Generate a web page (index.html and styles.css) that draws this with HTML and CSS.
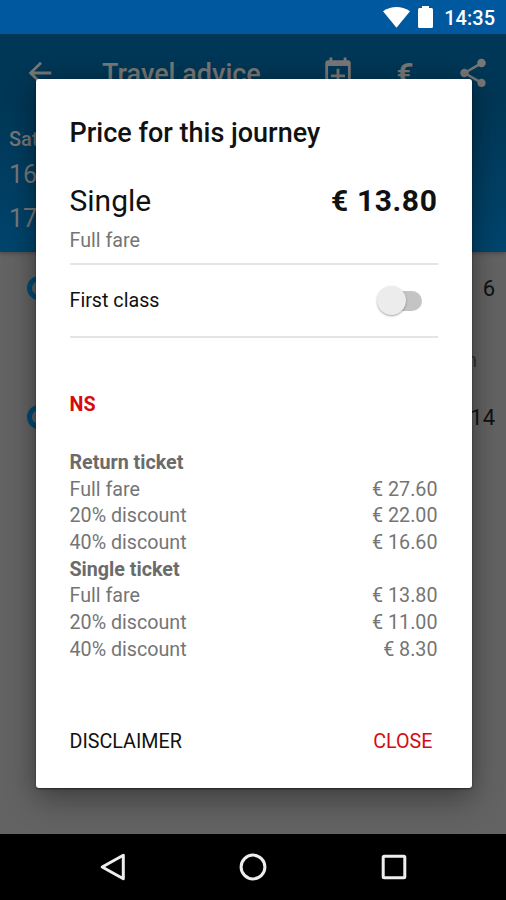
FILE: index.html
```html
<!DOCTYPE html>
<html lang="en">
<head>
<meta charset="utf-8">
<title>Travel advice</title>
<link rel="stylesheet" href="styles.css">
</head>
<body>
<div class="phone">
  <div class="status">
    <svg class="wifi" width="27" height="21" viewBox="0 0 27 21"><path d="M0 4.2Q13.5-4.2 27 4.2L13.5 20.7Z"/></svg>
    <svg class="battery" width="15" height="22" viewBox="0 0 15 22"><path d="M4 2V0h7v2h2.5Q15 2 15 3.5v17Q15 22 13.500 22h-12Q0 22 0 20.500v-17Q0 2 1.500 2Z"/></svg>
    <span>14:35</span>
  </div>
  <main class="screen">
    <header class="header">
      <div class="toolbar">
        <svg class="back" width="34" height="34" viewBox="0 0 24 24"><path d="M20 11H7.830l5.590-5.590L12 4l-8 8 8 8 1.410-1.410L7.830 13H20z"/></svg>
        <h1>Travel advice</h1>
        <svg class="calendar" width="34" height="34" viewBox="0 0 24 24"><path d="M17 13h-4V9h-2v4H7v2h4v4h2v-4h4zM16 1v2H8V1H6v2H5c-1.110 0-1.990.9-1.990 2L3 21h18V5c0-1.100-.9-2-2-2h-1V1zM19 19H5V7h14z" fill-rule="evenodd"/></svg>
        <span class="euro">€</span>
        <svg class="share" width="34" height="34" viewBox="0 0 24 24"><path d="M18 16.080c-.76 0-1.440.3-1.960.77L8.910 12.700c.05-.23.09-.46.09-.7s-.04-.47-.09-.7l7.050-4.110c.54.5 1.250.81 2.040.81 1.660 0 3-1.340 3-3s-1.340-3-3-3-3 1.340-3 3c0 .24.04.47.09.7L8.040 9.810C7.500 9.310 6.790 9 6 9c-1.660 0-3 1.340-3 3s1.340 3 3 3c.79 0 1.500-.31 2.040-.81l7.120 4.160c-.05.21-.08.43-.08.65 0 1.610 1.310 2.920 2.920 2.920s2.920-1.310 2.920-2.920-1.310-2.920-2.920-2.920z"/></svg>
      </div>
      <div class="day">Sat</div>
      <div class="time">16</div>
      <div class="time">17</div>
    </header>
    <div class="leg first"><i class="dot"></i><span>6</span></div>
    <div class="train">n</div>
    <div class="leg"><i class="dot"></i><span>14</span></div>
    <section class="dialog">
      <h2>Price for this journey</h2>
      <div class="total"><span>Single</span><b>€ 13.80</b></div>
      <div class="fare">Full fare</div>
      <div class="option"><span>First class</span><span class="switch"><i></i></span></div>
      <h3>NS</h3>
      <div class="prices">
        <div class="row"><b class="return">Return ticket</b></div>
        <div class="row"><span>Full fare</span><span>€ 27.60</span></div>
        <div class="row"><span class="disc">20% discount</span><span>€ 22.00</span></div>
        <div class="row"><span class="disc">40% discount</span><span>€ 16.60</span></div>
        <div class="row"><b>Single ticket</b></div>
        <div class="row"><span>Full fare</span><span>€ 13.80</span></div>
        <div class="row"><span class="disc">20% discount</span><span>€ 11.00</span></div>
        <div class="row"><span class="disc">40% discount</span><span>€ 8.30</span></div>
      </div>
      <div class="actions"><span>DISCLAIMER</span><span class="close">CLOSE</span></div>
    </section>
  </main>
  <nav class="nav">
    <svg width="28" height="30" viewBox="0 0 28 30"><path d="M24.300 3.200v23.600L3.200 15Z"/></svg>
    <svg width="28" height="30" viewBox="0 0 28 30"><circle cx="14" cy="15" r="11.900"/></svg>
    <svg width="28" height="30" viewBox="0 0 28 30"><rect x="3.200" y="4.200" width="21.600" height="21.600" rx="1"/></svg>
  </nav>
</div>
</body>
</html>
```
FILE: styles.css
```css
* { box-sizing: border-box; }
body { margin: 0; font-family: Roboto, sans-serif; }
h1, h2, h3 { margin: 0; font-weight: 500; }
.phone { width: 506px; height: 900px; display: flex; flex-direction: column; overflow: hidden; }
.status { height: 34px; flex: none; background: #00589f; color: #fff; display: flex; align-items: center; justify-content: flex-end; padding-right: 11px; font-size: 20px; font-weight: 500; line-height: 34px; }
.status svg { fill: #fff; }
.wifi { margin-right: 8px; }
.battery { margin-right: 11px; }
.status span { position: relative; top: 1px; }
.screen { position: relative; flex: 1; background: #636363; overflow: hidden; color: #111; font-size: 22px; }
.header { height: 218px; background: linear-gradient(#003756, #003756 30%, #00456d); color: #777; box-shadow: 0 1px 4px rgba(0,0,0,.3); }
.toolbar { height: 78px; display: flex; align-items: center; padding: 0 16px 0 23px; }
.toolbar svg { fill: #777; flex: none; }
.toolbar h1 { font-size: 27px; margin-left: 45px; flex: 1; position: relative; top: 1px; }
.euro { width: 34px; margin: 0 34px 0 33px; text-align: center; font-size: 30px; font-weight: 700; }
.day { padding-left: 9px; font-size: 20px; line-height: 24px; margin-top: 15px; height: 26px; font-weight: 500; }
.time { padding-left: 9px; font-size: 25px; line-height: 44px; height: 44px; }
.leg { display: flex; align-items: center; justify-content: space-between; height: 30px; padding: 0 11px 0 27px; }
.leg.first { margin-top: 21px; }
.dot { width: 24px; height: 24px; border: 5px solid #004a75; border-radius: 50%; }
.train { height: 99px; line-height: 114px; font-size: 20px; text-align: right; padding-right: 29px; color: #333; }
.dialog { position: absolute; left: 35.5px; top: 45px; width: 436px; height: 708.500px; background: #fff; border-radius: 3px; box-shadow: 0 1px 2px rgba(0,0,0,.5), 0 12px 32px rgba(0,0,0,.32), 0 0 20px rgba(0,0,0,.15); padding: 0 34px 0 34px; color: #111; font-size: 19.700px; }
.dialog h2 { font-size: 27px; line-height: 32px; padding-top: 38px; height: 98px; }
.total { display: flex; justify-content: space-between; font-size: 30px; line-height: 48px; height: 48px; }
.total b { letter-spacing: .6px; }
.fare { height: 40px; line-height: 31px; color: #757575; border-bottom: 2px solid #e4e4e4; }
.option { height: 73px; display: flex; align-items: center; justify-content: space-between; border-bottom: 2px solid #e4e4e4; padding-right: 16px; }
.switch { width: 45px; height: 20px; border-radius: 10px; background: linear-gradient(90deg, transparent 50%, #c4c4c4 50%); }
.switch i { display: block; width: 29px; height: 29px; border-radius: 50%; background: #ececec; box-shadow: 0 1px 2px rgba(0,0,0,.35); margin-top: -5px; }
.dialog h3 { color: #d50b12; font-size: 19.700px; font-weight: 700; line-height: 24px; padding-top: 55px; height: 112px; }
.prices { color: #757575; line-height: 26.700px; }
.row { display: flex; justify-content: space-between; height: 26.700px; }
.row b { color: #6b6b6b; }
.actions { display: flex; justify-content: space-between; margin-top: 66px; padding-right: 5px; line-height: 24px; }
.actions .close { color: #d50b12; }
.nav { height: 66px; flex: none; background: #000; display: flex; justify-content: center; align-items: center; gap: 112.500px; }
.nav svg { fill: none; stroke: #eee; stroke-width: 3; stroke-linejoin: round; }
```
